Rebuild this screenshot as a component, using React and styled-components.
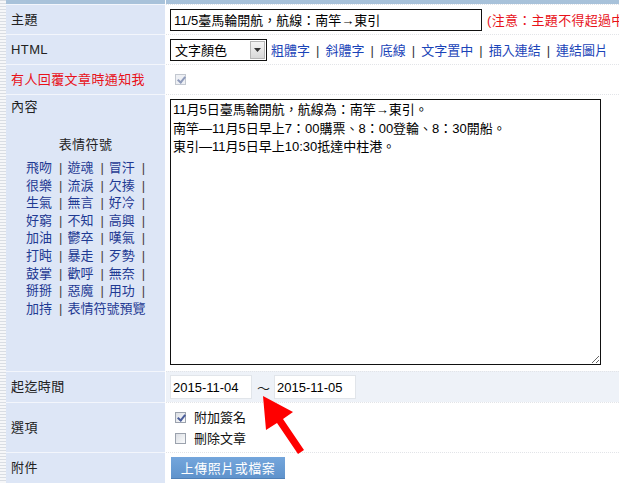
import styled, { createGlobalStyle } from "styled-components";

const GlobalStyle = createGlobalStyle`
  html, body {
    margin: 0;
    padding: 0;
    background: #ffffff;
    overflow: hidden;
  }
  body {
    font-family: "Liberation Sans", "Noto Sans CJK TC", sans-serif;
    font-size: 13px;
    color: #222;
  }
`;

const emoticons = [
  ["飛吻", "遊魂", "冒汗"],
  ["很樂", "流淚", "欠揍"],
  ["生氣", "無言", "好冷"],
  ["好窮", "不知", "高興"],
  ["加油", "鬱卒", "嘆氣"],
  ["打盹", "暴走", "歹勢"],
  ["鼓掌", "歡呼", "無奈"],
  ["掰掰", "惡魔", "用功"],
];

const htmlLinks = ["粗體字", "斜體字", "底線", "文字置中", "插入連結", "連結圖片"];

const App = () => {
  return (
    <>
      <GlobalStyle />
      <Page>
        <Stripe />
        <Form>
          <HeaderBar>
            <HeadCell />
            <HeadCell />
          </HeaderBar>

          <Row>
            <Label>主題</Label>
            <Field>
              <TextInput defaultValue="11/5臺馬輪開航，航線：南竿→東引" />
              <Note>(注意：主題不得超過中文50字)</Note>
            </Field>
          </Row>

          <Row>
            <Label>HTML</Label>
            <Field>
              <SelectBox>
                <SelectText>文字顏色</SelectText>
                <SelectArrow>
                  <svg width="7" height="4" viewBox="0 0 7 4">
                    <path d="M0 0h7L3.5 4z" fill="#333" />
                  </svg>
                </SelectArrow>
              </SelectBox>
              <Links>
                {htmlLinks.map((l, i) => (
                  <span key={l}>
                    {i > 0 && <Bar>|</Bar>}
                    <HtmlLink>{l}</HtmlLink>
                  </span>
                ))}
              </Links>
            </Field>
          </Row>

          <Row>
            <Label $red>有人回覆文章時通知我</Label>
            <Field>
              <Check $checked $disabled />
            </Field>
          </Row>

          <Row $height={277}>
            <Label $top>
              <div>內容</div>
              <EmoTitle>表情符號</EmoTitle>
              <EmoList>
                {emoticons.map((line, i) => (
                  <EmoLine key={i}>
                    {line.map((w) => (
                      <span key={w}>
                        <EmoLink>{w}</EmoLink>
                        <Sep>|</Sep>
                      </span>
                    ))}
                  </EmoLine>
                ))}
                <EmoLine>
                  <EmoLink>加持</EmoLink>
                  <Sep>|</Sep>
                  <EmoLink>表情符號預覽</EmoLink>
                </EmoLine>
              </EmoList>
            </Label>
            <Field $top>
              <TextArea
                defaultValue={
                  "11月5日臺馬輪開航，航線為：南竿→東引。\n南竿—11月5日早上7：00購票、8：00登輪、8：30開船。\n東引—11月5日早上10:30抵達中柱港。"
                }
              />
            </Field>
          </Row>

          <Row $height={31} $shade>
            <Label>起迄時間</Label>
            <Field>
              <DateInput defaultValue="2015-11-04" />
              <Tilde>～</Tilde>
              <DateInput defaultValue="2015-11-05" />
            </Field>
          </Row>

          <Row $height={50}>
            <Label>選項</Label>
            <Field $column>
              <Option>
                <Check $checked />
                <span>附加簽名</span>
              </Option>
              <Option>
                <Check />
                <span>刪除文章</span>
              </Option>
            </Field>
          </Row>

          <Row $height={31}>
            <Label>附件</Label>
            <Field>
              <UploadButton>上傳照片或檔案</UploadButton>
            </Field>
          </Row>
        </Form>

        <Arrow viewBox="0 0 619 483">
          <polygon
            points="263,396 293,412 283,419 304,450 298,454 277,423 266,430"
            fill="#ff0000"
          />
        </Arrow>
      </Page>
    </>
  );
};

const Page = styled.div`
  position: relative;
  width: 619px;
  height: 483px;
  display: flex;
  overflow: hidden;
`;

const Stripe = styled.div`
  width: 6px;
  flex-shrink: 0;
  background: repeating-linear-gradient(
    to bottom,
    #d9dde3 0px,
    #d9dde3 1px,
    #f6f7f9 1px,
    #f6f7f9 3px
  );
`;

const Form = styled.div`
  flex: 1;
  min-width: 0;
  display: flex;
  flex-direction: column;
`;

const HeaderBar = styled.div`
  display: grid;
  grid-template-columns: 159px 1fr;
  column-gap: 1px;
  height: 4px;
  background: #fff;
`;

const HeadCell = styled.div`
  background: #a8c2da;
`;

const Row = styled.div`
  display: grid;
  grid-template-columns: 159px minmax(0, 1fr);
  column-gap: 1px;
  height: ${({ $height }) => $height || 30}px;
  flex-shrink: 0;
  background: #fff;
  & > div:first-child {
    border-top: 1px solid #f3f6fc;
  }
  & > div:last-child {
    border-top: 1px dotted #e2e4e8;
    background: ${({ $shade }) => ($shade ? "#eef2f8" : "#fff")};
  }
`;

const Label = styled.div`
  background: #dde6f6;
  color: ${({ $red }) => ($red ? "#e8121a" : "#222")};
  padding: ${({ $top }) => ($top ? "3px 0 0 5px" : "0 0 0 5px")};
  display: flex;
  flex-direction: column;
  justify-content: ${({ $top }) => ($top ? "flex-start" : "center")};
  line-height: 18px;
  letter-spacing: 0.4px;
`;

const Field = styled.div`
  display: flex;
  flex-direction: ${({ $column }) => ($column ? "column" : "row")};
  align-items: ${({ $column, $top }) =>
    $column || $top ? "flex-start" : "center"};
  justify-content: ${({ $column }) => ($column ? "center" : "flex-start")};
  gap: ${({ $column }) => ($column ? "4px" : "0")};
  padding: ${({ $top }) => ($top ? "4px 0 0 4px" : "0 0 0 4px")};
  white-space: nowrap;
  overflow: hidden;
`;

const TextInput = styled.input`
  flex-shrink: 0;
  width: 312px;
  height: 22px;
  box-sizing: border-box;
  border: 1px solid #111;
  padding: 0 3px;
  font: inherit;
  font-size: 13px;
  color: #000;
  outline: none;
`;

const Note = styled.span`
  flex-shrink: 0;
  color: #e8121a;
  margin-left: 5px;
  letter-spacing: 0.3px;
`;

const SelectBox = styled.div`
  flex-shrink: 0;
  width: 97px;
  height: 22px;
  box-sizing: border-box;
  border: 1px solid #111;
  display: flex;
  align-items: center;
  justify-content: space-between;
  padding-left: 4px;
  background: #fff;
`;

const SelectText = styled.span`
  color: #000;
`;

const SelectArrow = styled.span`
  width: 15px;
  height: 18px;
  margin-right: 1px;
  box-sizing: border-box;
  border: 1px solid #b5b5b5;
  background: linear-gradient(#f4f4f4, #d8d8d8);
  display: flex;
  align-items: center;
  justify-content: center;
`;

const Links = styled.div`
  margin-left: 4px;
`;

const HtmlLink = styled.a`
  color: #1a44b8;
  cursor: pointer;
`;

const Bar = styled.span`
  color: #333;
  margin: 0 6px;
`;

const Check = styled.span`
  display: inline-block;
  flex-shrink: 0;
  width: 11px;
  height: 11px;
  box-sizing: border-box;
  border: 1px solid ${({ $disabled }) => ($disabled ? "#c3c8d0" : "#9ba2ad")};
  background: ${({ $disabled }) =>
    $disabled ? "#eef0f4" : "linear-gradient(135deg, #dcdfe4, #fafbfc)"};
  position: relative;
  margin-left: 5px;
  &::after {
    content: "";
    display: ${({ $checked }) => ($checked ? "block" : "none")};
    position: absolute;
    left: 3px;
    top: 0px;
    width: 3px;
    height: 6px;
    border: solid ${({ $disabled }) => ($disabled ? "#8f9bbb" : "#4a5d9a")};
    border-width: 0 2px 2px 0;
    transform: rotate(40deg);
  }
`;

const EmoTitle = styled.div`
  text-align: center;
  margin-top: 20px;
  padding-right: 5px;
`;

const EmoList = styled.div`
  margin-top: 5px;
  padding-left: 15px;
  letter-spacing: 0;
`;

const EmoLine = styled.div`
  line-height: 17.6px;
  white-space: nowrap;
`;

const EmoLink = styled.a`
  color: #1f3a93;
  cursor: pointer;
`;

const Sep = styled.span`
  color: #4a3f3a;
  margin: 0 5px 0 7px;
`;

const TextArea = styled.textarea`
  width: 431px;
  height: 266px;
  box-sizing: border-box;
  border: 1px solid #111;
  padding: 1px 2px;
  font: inherit;
  font-size: 13px;
  line-height: 18.5px;
  color: #000;
  resize: both;
  outline: none;
`;

const DateInput = styled.input`
  flex-shrink: 0;
  width: 82px;
  height: 24px;
  box-sizing: border-box;
  border: 1px solid #e1e5ea;
  background: #fff;
  padding: 0 2px;
  font: inherit;
  font-size: 13px;
  color: #000;
  outline: none;
`;

const Tilde = styled.span`
  margin: 0 4px 0 5px;
  color: #222;
`;

const Option = styled.label`
  display: flex;
  align-items: center;
  gap: 8px;
  line-height: 17px;
  color: #111;
`;

const UploadButton = styled.button`
  flex-shrink: 0;
  margin-left: 1px;
  width: 114px;
  height: 22px;
  border: none;
  border-bottom: 1px solid #4f7fb5;
  background: linear-gradient(#74a6dc, #5f93cc);
  color: #fff;
  font: inherit;
  font-size: 13px;
  letter-spacing: 0.5px;
  cursor: pointer;
`;

const Arrow = styled.svg`
  position: absolute;
  left: 0;
  top: 0;
  width: 619px;
  height: 483px;
  pointer-events: none;
`;

export default App;
